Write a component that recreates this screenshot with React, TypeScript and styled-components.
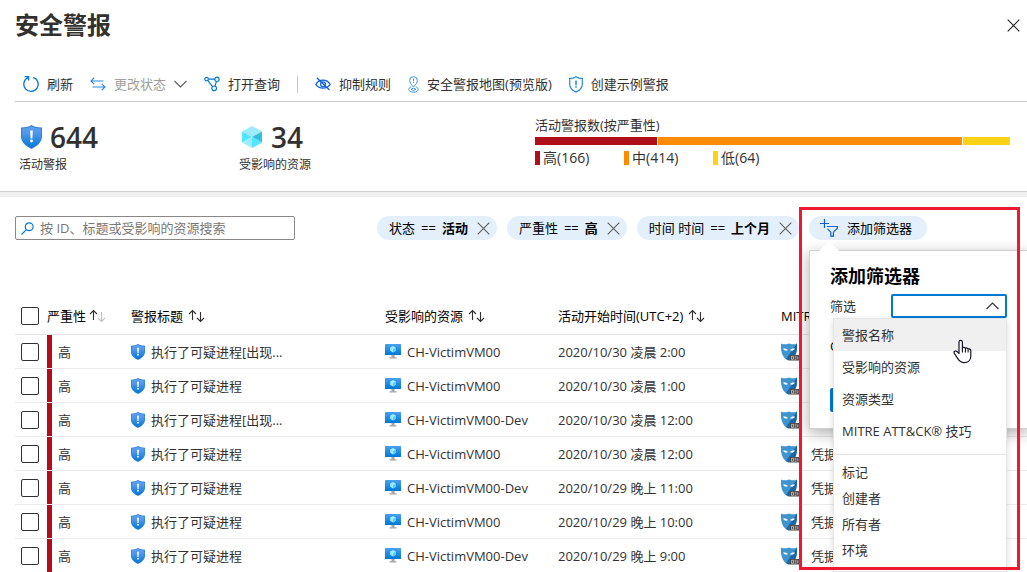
import React from "react";
import styled, { createGlobalStyle } from "styled-components";

const GlobalStyle = createGlobalStyle`
  *, *::before, *::after { box-sizing: border-box; }
  body {
    margin: 0;
    background: #fff;
    color: #323130;
    font-family: "Open Sans", "Noto Sans CJK SC", sans-serif;
    font-size: 13px;
    line-height: 20px;
  }
  button, input, select { font: inherit; color: inherit; }
`;

const Page = styled.main`
  min-height: 100vh;
  overflow: hidden;
  white-space: nowrap;
`;

const Header = styled.header`
  display: flex;
  align-items: center;
  justify-content: space-between;
  height: 50px;
  margin-bottom: 17px;
  padding: 0 7px 0 15px;
`;

const Title = styled.h1`
  margin: 0;
  font-size: 24px;
  line-height: 32px;
  font-weight: 700;
`;

const IconButton = styled.button`
  display: inline-flex;
  padding: 0;
  border: 0;
  background: none;
  cursor: pointer;
`;

const Toolbar = styled.nav`
  display: flex;
  align-items: center;
  height: 35px;
  margin-left: 15px;
  padding-left: 8px;
  gap: 17px;
  border-bottom: 1px solid #c8c8c8;
`;

const Command = styled.button`
  display: inline-flex;
  align-items: center;
  gap: 8px;
  padding: 0;
  border: 0;
  background: none;
  cursor: pointer;
  &:disabled { color: #a19f9d; cursor: default; }
`;

const Separator = styled.span`
  width: 1px;
  height: 17px;
  background: #c8c6c4;
`;

const Summary = styled.section`
  display: grid;
  grid-template-columns: 220px 296px minmax(0, 1fr);
  height: 90px;
  padding: 14px 17px 0 19px;
  border-bottom: 1px solid #cfcfcf;
  box-shadow: 0 5px 0 #f0f0f0;
`;

const Stat = styled.div`
  padding-top: 5px;
`;

const StatValue = styled.div`
  display: flex;
  align-items: center;
  gap: 8px;
  padding-left: 2px;
  font-size: 28px;
  line-height: 32px;
  font-weight: 600;
`;

const StatLabel = styled.div`
  font-size: 12px;
  line-height: 24px;
`;

const ChartTitle = styled.div`
  height: 21px;
  line-height: 18px;
`;

const Bar = styled.div`
  display: flex;
  gap: 1px;
  height: 8px;
`;

const Segment = styled.span<{ $share: number; $color: string }>`
  flex: ${(p) => p.$share} 0 0;
  background: ${(p) => p.$color};
`;

const Legend = styled.div`
  display: flex;
  padding-top: 3px;
`;

const LegendItem = styled.span<{ $color: string }>`
  display: flex;
  align-items: center;
  gap: 3px;
  width: 89px;
  font-size: 14px;
  &::before {
    content: "";
    width: 5px;
    height: 14px;
    background: ${(p) => p.$color};
  }
`;

const FilterBar = styled.section`
  display: flex;
  align-items: center;
  gap: 10px;
  padding: 24px 0 58px 15px;
  color: #000;
`;

const SearchBox = styled.label`
  display: flex;
  align-items: center;
  flex: none;
  gap: 6px;
  width: 280px;
  height: 24px;
  margin-right: 72px;
  padding: 0 5px;
  border: 1px solid #8a8886;
  border-radius: 2px;
  input {
    flex: 1;
    min-width: 0;
    height: 20px;
    padding: 0;
    border: 0;
    outline: 0;
    background: none;
  }
  input::placeholder { color: #797775; opacity: 1; }
`;

const Pill = styled.div`
  display: flex;
  align-items: center;
  flex: none;
  gap: 6px;
  height: 24px;
  padding: 0 7px 0 12px;
  border-radius: 12px;
  background: #e3f0fb;
  b { margin-right: 3px; font-weight: 700; }
`;

const FilterAnchor = styled.div`
  position: relative;
  flex: none;
  z-index: 2;
`;

const AddFilter = styled.button`
  display: flex;
  align-items: center;
  gap: 9px;
  height: 24px;
  padding: 0 15px 0 11px;
  border: 0;
  border-radius: 12px;
  background: #e3f0fb;
  cursor: pointer;
`;

const Callout = styled.div`
  position: absolute;
  top: 34px;
  left: 0;
  width: 219px;
  height: 179px;
  padding: 13px 20px;
  border: 1px solid #d0d0d0;
  background: #fff;
  box-shadow: 0 4px 14px rgba(0, 0, 0, 0.32);
`;

const Beak = styled.svg`
  position: absolute;
  top: -10px;
  left: 8px;
`;

const CalloutTitle = styled.h2`
  margin: 0 0 6px;
  font-size: 18px;
  line-height: 24px;
  font-weight: 700;
`;

const Field = styled.div`
  position: relative;
  display: flex;
  align-items: center;
  justify-content: space-between;
  height: 24px;
  color: #323130;
`;

const SelectBox = styled.span`
  position: relative;
  display: flex;
  select {
    width: 116px;
    height: 24px;
    appearance: none;
    border: 2px solid #0078d4;
    border-radius: 2px;
    background: #fff;
    outline: 0;
  }
  svg {
    position: absolute;
    top: 8px;
    right: 8px;
    pointer-events: none;
  }
`;

const OperatorLabel = styled.div`
  margin-top: 18px;
  height: 20px;
`;

const ApplyButton = styled.button`
  display: block;
  width: 60px;
  height: 24px;
  margin-top: 32px;
  border: 0;
  border-radius: 2px;
  background: #0078d4;
  cursor: pointer;
`;

const Options = styled.ul`
  position: absolute;
  top: 24px;
  right: 0;
  width: 174px;
  margin: 0;
  padding: 0 0 8px;
  list-style: none;
  border: 1px solid #e6e6e6;
  background: #fff;
  box-shadow: 0 2px 6px rgba(0, 0, 0, 0.15);
`;

const Option = styled.li<{ $compact?: boolean; $active?: boolean }>`
  display: flex;
  align-items: center;
  height: ${(p) => (p.$compact ? 26 : 32)}px;
  padding-left: 8px;
  background: ${(p) => (p.$active ? "#f0f0f0" : "#fff")};
`;

const Divider = styled.li`
  height: 1px;
  margin: 7px 0 4px;
  background: #e4e4e4;
`;

const Pointer = styled.svg`
  position: absolute;
  top: 20px;
  right: 34px;
`;

const Highlight = styled.div`
  position: absolute;
  top: -9px;
  left: -10px;
  width: 221px;
  height: 363px;
  border: 3px solid #f01830;
  pointer-events: none;
`;

const AlertTable = styled.table`
  width: calc(100% - 15px);
  margin-left: 15px;
  table-layout: fixed;
  border-collapse: separate;
  border-spacing: 0;
`;

const HeadCell = styled.th<{ $width?: number }>`
  width: ${(p) => (p.$width ? `${p.$width}px` : "auto")};
  height: 37px;
  padding: 0;
  color: #000;
  font-weight: 400;
  text-align: left;
  border-bottom: 1px solid #e4e4e4;
`;

const Cell = styled.td`
  height: 34px;
  padding: 0;
  border-bottom: 1px solid #ebebeb;
`;

const Inline = styled.span<{ $gap: number }>`
  display: flex;
  align-items: center;
  gap: ${(p) => p.$gap}px;
`;

const Severity = styled.span`
  display: flex;
  align-items: center;
  height: 33px;
  padding-left: 6px;
  border-left: 5px solid #b10e1c;
`;

const Check = styled.input`
  display: block;
  appearance: none;
  width: 18px;
  height: 18px;
  margin: 0 0 0 6px;
  border: 1px solid #323130;
  border-radius: 2px;
  background: #fff;
`;

const CloseIcon = ({ size, color }: { size: number; color: string }) => (
  <svg width={size} height={size} viewBox="0 0 13 13" fill="none" stroke={color} strokeWidth="1.1">
    <path d="M.7.7l11.6 11.6M12.3.7L.7 12.3" />
  </svg>
);

const RefreshIcon = () => (
  <svg width="16" height="18" viewBox="0 0 16 18" fill="none" stroke="#0078d4" strokeWidth="1.3">
    <path d="M10.2 2.3A7.2 7.2 0 1 1 5 2.6M1.6 1.6h4v4" />
  </svg>
);

const SwapIcon = () => (
  <svg width="16" height="14" viewBox="0 0 16 14" fill="none" stroke="#2b8bdc" strokeWidth="1.2">
    <path d="M13.5 4H1M4.2.8L1 4l3.2 3.2M2.5 10H15M11.8 6.8L15 10l-3.2 3.2" />
  </svg>
);

const Chevron = ({ up }: { up?: boolean }) => (
  <svg width="13" height="8" viewBox="0 0 13 8" fill="none" stroke={up ? "#323130" : "#605e5c"} strokeWidth="1.1">
    <path d={up ? "M.5 7l6-6 6 6" : "M.5 1l6 6 6-6"} />
  </svg>
);

const QueryIcon = () => (
  <svg width="16" height="16" viewBox="0 0 17 16" fill="none" stroke="#0078d4" strokeWidth="1.2">
    <circle cx="2.7" cy="2.8" r="1.9" />
    <circle cx="13.8" cy="3" r="2.3" />
    <circle cx="10.8" cy="12.6" r="2.5" />
    <path d="M4.6 2.8h6.9M4 4.2l5 6.6M13.2 5.3l-1.5 4.8" />
  </svg>
);

const HideIcon = () => (
  <svg width="16" height="14" viewBox="0 0 16 14" fill="none" stroke="#0a5fd8" strokeWidth="1.2">
    <path d="M.8 7.4C2.5 4.6 5 3.2 8 3.2s5.5 1.4 7.2 4.2C13.5 10 11 11.2 8 11.2S2.5 10 .8 7.4z" />
    <circle cx="8" cy="7.2" r="2.4" />
    <path d="M2 1l12.5 12" />
  </svg>
);

const MapIcon = () => (
  <svg width="11" height="17" viewBox="0 0 11 17" fill="none" stroke="#3a96dd" strokeWidth="1">
    <path d="M5.5 11C3 8.5 1.7 6.500 1.7 4.400a3.800 3.800 0 0 1 7.600 0c0 2.100-1.300 4.100-3.800 6.600z" />
    <path d="M5.500 2.500v2.700M5.500 6v1M3.200 10.800c-1.500.500-2.400 1.400-2.400 2.500 0 1.800 2 2.900 4.700 2.900s4.700-1.100 4.700-2.900c0-1.100-.900-2-2.400-2.500M3 13.300l2.500 1.200L8 13.300l-2.500-1.200z" />
  </svg>
);

const ShieldOutline = () => (
  <svg width="14" height="17" viewBox="0 0 14 17" fill="none" stroke="#2b8bdc" strokeWidth="1.200">
    <path d="M7 .8c1.800 1.300 3.800 1.900 6.300 1.900v5.500c0 3.500-2.400 6-6.300 7.900C3.100 14.200.7 11.700.7 8.200V2.700C3.200 2.700 5.200 2.100 7 .8z" />
    <path d="M7 4.500v4.800M7 10.200v1.500" strokeWidth="1.600" />
  </svg>
);

const ShieldIcon = ({ width, height }: { width: number; height: number }) => (
  <svg width={width} height={height} viewBox="0 0 21 24">
    <defs>
      <linearGradient id="shieldBody" x1="0" y1="0" x2="0" y2="1">
        <stop offset="0" stopColor="#5ea0ef" />
        <stop offset=".3" stopColor="#5398ea" />
        <stop offset="1" stopColor="#0078d4" />
      </linearGradient>
    </defs>
    <path d="M10.500 0C13.500 1.800 16.500 2.400 21 2.500v9c0 5.500-4.500 9.500-10.500 12.500C4.500 21 0 17 0 11.500v-9C4.500 2.400 7.500 1.800 10.500 0z" fill="#2f80d8" />
    <path d="M10.500 1.200C13.500 2.800 16.200 3.300 20 3.500v8c0 4.900-4 8.600-9.500 11.400C5 20.100 1 16.400 1 11.500v-8c3.800-.2 6.500-.7 9.500-2.300z" fill="url(#shieldBody)" />
    <path d="M9.200 5.500h2.600l-.4 8H9.600z" fill="#fff" />
    <circle cx="10.500" cy="16" r="1.400" fill="#fff" />
  </svg>
);

const CubeIcon = () => (
  <svg width="22" height="24" viewBox="0 0 22 24">
    <path d="M11 1l10 5.500L11 12 1 6.500z" fill="#9cebff" />
    <path d="M1 6.500L11 12 1 17.500z" fill="#50e6ff" />
    <path d="M1 17.500L11 12v11z" fill="#9cebff" />
    <path d="M21 6.500L11 12l10 5.500z" fill="#32bedd" />
    <path d="M21 17.500L11 12v11z" fill="#50e6ff" />
  </svg>
);

const SearchIcon = () => (
  <svg width="13" height="13" viewBox="0 0 13 13" fill="none" stroke="#0078d4" strokeWidth="1.200">
    <circle cx="8.200" cy="4.800" r="3.900" />
    <path d="M5.400 7.600L.5 12.500" />
  </svg>
);

const AddFilterIcon = () => (
  <svg width="18" height="18" viewBox="0 0 18 18" fill="none" stroke="#0a5fd8" strokeWidth="1.200">
    <path d="M0 4.500h9M4.500 0v9M7 7.500h10.400v1.700l-4 4v3.900h-2.600v-3.900L7.500 9.800" />
  </svg>
);

const SortIcon = ({ ascending }: { ascending?: boolean }) => (
  <svg width="17" height="14" viewBox="0 0 17 14" fill="none" strokeWidth="1.100">
    <path d="M4.500 1.500v9.500M1 5l3.500-3.500L8 5" stroke="#323130" />
    <path d="M12.500 3v9.500M9 9l3.500 3.500L16 9" stroke={ascending ? "#c0c0c0" : "#323130"} />
  </svg>
);

const MachineIcon = () => (
  <svg width="16" height="16" viewBox="0 0 16 16">
    <defs>
      <linearGradient id="screen" x1="0" y1="0" x2="0" y2="1">
        <stop offset="0" stopColor="#4aa0ef" />
        <stop offset="1" stopColor="#0078d4" />
      </linearGradient>
    </defs>
    <rect width="16" height="11" rx=".5" fill="url(#screen)" />
    <path d="M8 2l2.800 1.600v3.200L8 8.500 5.200 6.800V3.600z" fill="#9cebff" />
    <path d="M8 5.200l2.800-1.600v3.200L8 8.500z" fill="#50d0f5" />
    <path d="M6.400 11h3.200v2.300h2V14.500H4.400v-1.200h2z" fill="#a8a8a8" />
  </svg>
);

const MaskIcon = () => (
  <svg width="20" height="18" viewBox="0 0 20 18">
    <path d="M0 .5c3 1.400 5 .9 8-.1 3 1 5 1.500 8 .1 .3 6-.5 10-2.500 13-1.500 2.300-3.500 3.500-5.500 3.900C6 17 4 15.800 2.500 13.500.5 10.500-.3 6.500 0 .5z" fill="#3f93cf" />
    <path d="M16 .5c.3 6-.5 10-2.500 13-1.500 2.300-3.500 3.500-5.500 3.900-1-.2-2-.6-3-1.300z" fill="#1c66a6" />
    <path d="M2 5.600c2-.5 3.800-.1 5 1.500-1.800 1-4 .7-5-1.500zM14 5.600c-2-.5-3.800-.1-5 1.500 1.800 1 4 .7 5-1.500z" fill="#fff" />
    <rect x="9" y="12" width="10" height="5.500" fill="#4a4a4a" />
    <path d="M10.500 13.300h2v3h-2zM13.800 13.300h1.600M13.800 14.800h1.600M13.800 16.300h1.600M16.800 13.300v3" stroke="#ddd" strokeWidth=".7" fill="none" />
  </svg>
);

const HandIcon = () => (
  <Pointer width="19" height="25" viewBox="0 0 19 25">
    <path
      d="M6 13.500V3a1.700 1.700 0 0 1 3.400 0v6c.8-1.100 2.600-.8 3 .4.900-.8 2.400-.4 2.700.8 1.300-.7 2.700 0 2.700 1.500v5.200c0 4.200-2.800 6.700-6.600 6.700-3.400 0-5-1.600-6.600-4.200L1.200 14.200c-.7-1.400.5-2.500 1.800-2.100 1.200.4 2.100 1.200 3 2.400z"
      fill="#fff"
      stroke="#15152a"
      strokeWidth="1.200"
      strokeLinejoin="round"
    />
    <path d="M9.400 9v4.500M12.400 9.500v4M15.100 10.500v3" stroke="#15152a" strokeWidth="1.100" />
  </Pointer>
);

const severities = [
  { label: "高", count: 166, color: "#b10e1c" },
  { label: "中", count: 414, color: "#ff8c00" },
  { label: "低", count: 64, color: "#fcd116" },
];

const filters = [
  { name: "状态", value: "活动" },
  { name: "严重性", value: "高" },
  { name: "时间 时间", value: "上个月" },
];

const alerts = [
  { title: "执行了可疑进程[出现...", resource: "CH-VictimVM00", time: "2020/10/30 凌晨 2:00" },
  { title: "执行了可疑进程", resource: "CH-VictimVM00", time: "2020/10/30 凌晨 1:00" },
  { title: "执行了可疑进程[出现...", resource: "CH-VictimVM00-Dev", time: "2020/10/30 凌晨 12:00" },
  { title: "执行了可疑进程", resource: "CH-VictimVM00", time: "2020/10/30 凌晨 12:00" },
  { title: "执行了可疑进程", resource: "CH-VictimVM00-Dev", time: "2020/10/29 晚上 11:00" },
  { title: "执行了可疑进程", resource: "CH-VictimVM00", time: "2020/10/29 晚上 10:00" },
  { title: "执行了可疑进程", resource: "CH-VictimVM00-Dev", time: "2020/10/29 晚上 9:00" },
];

const properties = ["警报名称", "受影响的资源", "资源类型", "MITRE ATT&CK® 技巧"];
const tags = ["标记", "创建者", "所有者", "环境"];

const AddFilterCallout = () => (
  <Callout role="dialog" aria-labelledby="callout-title">
    <Beak width="22" height="11" viewBox="0 0 22 11">
      <path d="M0 11L11 0l11 11z" fill="#fff" />
    </Beak>
    <CalloutTitle id="callout-title">添加筛选器</CalloutTitle>
    <Field>
      <label htmlFor="filter-field">筛选</label>
      <SelectBox>
        <select id="filter-field" defaultValue="">
          <option value="" />
        </select>
        <Chevron up />
      </SelectBox>
      <Options role="listbox" aria-label="筛选">
        {properties.map((name, i) => (
          <Option key={name} role="option" aria-selected={i === 0} $active={i === 0}>
            {name}
          </Option>
        ))}
        <Divider role="separator" />
        {tags.map((name) => (
          <Option key={name} role="option" aria-selected={false} $compact>
            {name}
          </Option>
        ))}
        <HandIcon />
      </Options>
    </Field>
    <OperatorLabel>O</OperatorLabel>
    <ApplyButton type="button" aria-label="确定" />
  </Callout>
);

export default function App() {
  return (
    <Page>
      <GlobalStyle />
      <Header>
        <Title>安全警报</Title>
        <IconButton type="button" aria-label="关闭">
          <CloseIcon size={13} color="#201f1e" />
        </IconButton>
      </Header>

      <Toolbar>
        <Command type="button"><RefreshIcon />刷新</Command>
        <Command type="button" disabled><SwapIcon />更改状态<Chevron /></Command>
        <Command type="button"><QueryIcon />打开查询</Command>
        <Separator />
        <Command type="button"><HideIcon />抑制规则</Command>
        <Command type="button"><MapIcon />安全警报地图(预览版)</Command>
        <Command type="button"><ShieldOutline />创建示例警报</Command>
      </Toolbar>

      <Summary>
        <Stat>
          <StatValue><ShieldIcon width={21} height={24} />644</StatValue>
          <StatLabel>活动警报</StatLabel>
        </Stat>
        <Stat>
          <StatValue><CubeIcon />34</StatValue>
          <StatLabel>受影响的资源</StatLabel>
        </Stat>
        <div>
          <ChartTitle>活动警报数(按严重性)</ChartTitle>
          <Bar>
            {severities.map((s) => (
              <Segment key={s.label} $share={s.count} $color={s.color} />
            ))}
          </Bar>
          <Legend>
            {severities.map((s) => (
              <LegendItem key={s.label} $color={s.color}>{`${s.label}(${s.count})`}</LegendItem>
            ))}
          </Legend>
        </div>
      </Summary>

      <FilterBar>
        <SearchBox>
          <SearchIcon />
          <input type="text" aria-label="搜索" placeholder="按 ID、标题或受影响的资源搜索" />
        </SearchBox>
        {filters.map((f) => (
          <Pill key={f.name}>
            <span>{f.name}</span>
            <span>==</span>
            <b>{f.value}</b>
            <IconButton type="button" aria-label="删除">
              <CloseIcon size={13} color="#605e5c" />
            </IconButton>
          </Pill>
        ))}
        <FilterAnchor>
          <AddFilter type="button"><AddFilterIcon />添加筛选器</AddFilter>
          <AddFilterCallout />
          <Highlight />
        </FilterAnchor>
      </FilterBar>

      <AlertTable>
        <thead>
          <tr>
            <HeadCell $width={32}><Check type="checkbox" aria-label="全选" /></HeadCell>
            <HeadCell $width={84}><Inline $gap={3}>严重性<SortIcon ascending /></Inline></HeadCell>
            <HeadCell $width={254}><Inline $gap={5}>警报标题<SortIcon /></Inline></HeadCell>
            <HeadCell $width={173}><Inline $gap={5}>受影响的资源<SortIcon /></Inline></HeadCell>
            <HeadCell $width={223}><Inline $gap={5}>活动开始时间(UTC+2)<SortIcon /></Inline></HeadCell>
            <HeadCell>MITRE</HeadCell>
          </tr>
        </thead>
        <tbody>
          {alerts.map((a, i) => (
            <tr key={i}>
              <Cell><Check type="checkbox" aria-label={a.title} /></Cell>
              <Cell><Severity>高</Severity></Cell>
              <Cell><Inline $gap={6}><ShieldIcon width={14} height={16} />{a.title}</Inline></Cell>
              <Cell><Inline $gap={6}><MachineIcon />{a.resource}</Inline></Cell>
              <Cell>{a.time}</Cell>
              <Cell><Inline $gap={10}><MaskIcon />凭据</Inline></Cell>
            </tr>
          ))}
        </tbody>
      </AlertTable>
    </Page>
  );
}
